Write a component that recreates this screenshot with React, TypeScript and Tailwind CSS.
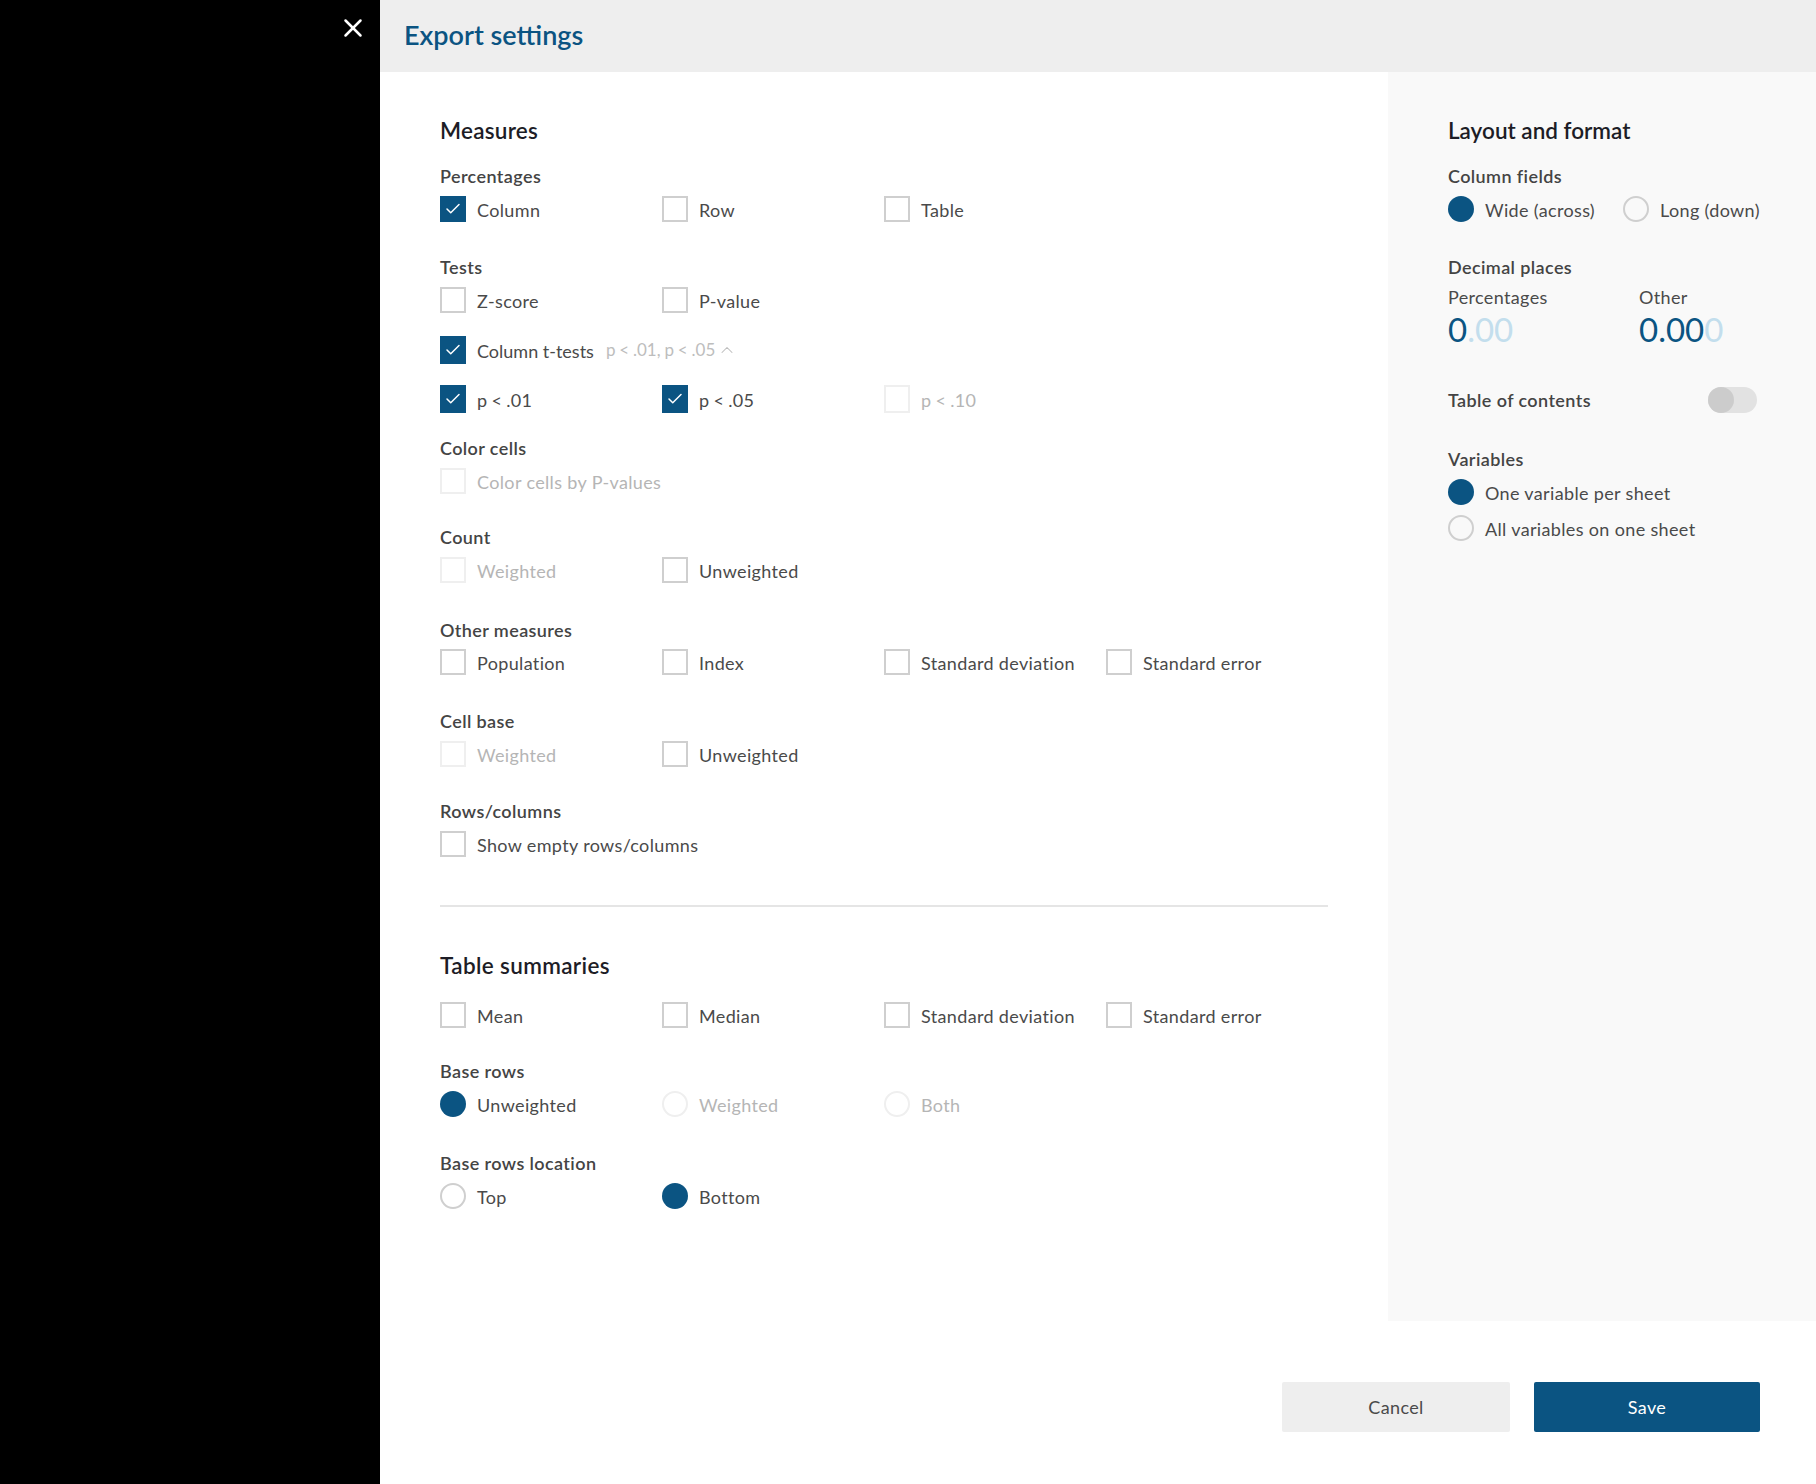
import { ReactNode } from 'react';
import { X, Check, ChevronUp } from 'lucide-react';

const font = "font-['Lato','Noto_Sans',sans-serif]";
const optBase = 'text-[18px] leading-[24px] pt-[2px] whitespace-nowrap';
const optText = `${optBase} tracking-[0.35px]`;

function Box({ checked, disabled, tall }: { checked?: boolean; disabled?: boolean; tall?: boolean }) {
  const h = tall ? 'h-[28px]' : 'h-[26px]';
  if (checked) {
    return (
      <span className={`w-[26px] ${h} shrink-0 bg-[#0b5482] flex items-center justify-center`}>
        <Check size={18} strokeWidth={2} className="text-white" />
      </span>
    );
  }
  return <span className={`w-[26px] ${h} shrink-0 border-2 ${disabled ? 'border-[#efefef]' : 'border-[#cfcfcf]'}`} />;
}

function Radio({ checked, disabled }: { checked?: boolean; disabled?: boolean }) {
  if (checked) return <span className="w-[26px] h-[26px] shrink-0 rounded-full bg-[#0b5482]" />;
  return <span className={`w-[26px] h-[26px] shrink-0 rounded-full border-2 ${disabled ? 'border-[#efefef]' : 'border-[#cfcfcf]'}`} />;
}

function Opt({ label, disabled, tight, children }: { label: string; disabled?: boolean; tight?: boolean; children: ReactNode }) {
  return (
    <div className="w-[222px] flex items-center gap-[11px] shrink-0">
      {children}
      <span className={`${optText} ${tight ? '[word-spacing:-1px]' : ''} ${disabled ? 'text-[#b5b5b5]' : 'text-[#4a4a4a]'}`}>{label}</span>
    </div>
  );
}

function Label({ children, className = '' }: { children: ReactNode; className?: string }) {
  return <div className={`text-[18px] tracking-[0.4px] leading-[21px] pt-px font-semibold text-[#444444] ${className}`}>{children}</div>;
}

function Heading({ children, className = '' }: { children: ReactNode; className?: string }) {
  return <h2 className={`text-[22.5px] leading-[28px] font-semibold text-[#1d1d26] ${className}`}>{children}</h2>;
}

export default function App() {
  return (
    <div className={`${font} w-[1816px] h-[1484px] flex bg-white overflow-hidden`}>
      {/* backdrop */}
      <div className="w-[380px] shrink-0 bg-black flex justify-end items-start pt-[13px] pr-[12px]">
        <X size={30} strokeWidth={2} className="text-white" />
      </div>

      <div className="flex-1 flex flex-col">
        <header className="h-[72px] shrink-0 bg-[#eeeeee] flex items-center pl-[24px] pb-[2px]">
          <h1 className="text-[27px] font-semibold text-[#0b5482]">Export settings</h1>
        </header>

        <div className="flex h-[1249px]">
          {/* Measures column */}
          <main className="w-[1008px] pl-[60px] pr-[60px] pt-[45px]">
            <Heading className="tracking-[0.25px]">Measures</Heading>
            <Label className="mt-[20px]">Percentages</Label>
            <div className="flex mt-[9px]">
              <Opt label="Column"><Box checked /></Opt>
              <Opt label="Row"><Box /></Opt>
              <Opt label="Table"><Box /></Opt>
            </div>

            <Label className="mt-[34px]">Tests</Label>
            <div className="flex mt-[9px]">
              <Opt label="Z-score"><Box /></Opt>
              <Opt label="P-value"><Box /></Opt>
            </div>
            <div className="flex items-center mt-[23px]">
              <Box checked tall />
              <span className={`ml-[11px] ${optBase} text-[#4a4a4a]`}>Column t-tests</span>
              <span className="ml-[12px] text-[17px] [word-spacing:-0.5px] text-[#bdbdbd]">p &lt; .01, p &lt; .05</span>
              <ChevronUp size={20} strokeWidth={1.25} className="ml-[2px] text-[#bdbdbd]" />
            </div>
            <div className="flex mt-[21px]">
              <Opt label="p < .01" tight><Box checked tall /></Opt>
              <Opt label="p < .05" tight><Box checked tall /></Opt>
              <Opt label="p < .10" tight disabled><Box disabled tall /></Opt>
            </div>

            <Label className="mt-[24px]">Color cells</Label>
            <div className="flex mt-[9px]">
              <Opt label="Color cells by P-values" disabled><Box disabled /></Opt>
            </div>

            <Label className="mt-[32px]">Count</Label>
            <div className="flex mt-[9px]">
              <Opt label="Weighted" disabled><Box disabled /></Opt>
              <Opt label="Unweighted"><Box /></Opt>
            </div>

            <Label className="mt-[36px]">Other measures</Label>
            <div className="flex mt-[8px]">
              <Opt label="Population"><Box /></Opt>
              <Opt label="Index"><Box /></Opt>
              <Opt label="Standard deviation"><Box /></Opt>
              <Opt label="Standard error"><Box /></Opt>
            </div>

            <Label className="mt-[35px]">Cell base</Label>
            <div className="flex mt-[9px]">
              <Opt label="Weighted" disabled><Box disabled /></Opt>
              <Opt label="Unweighted"><Box /></Opt>
            </div>

            <Label className="mt-[33px]">Rows/columns</Label>
            <div className="flex mt-[9px]">
              <Opt label="Show empty rows/columns"><Box /></Opt>
            </div>

            <div className="h-[2px] bg-[#e5e5e5] mt-[48px]" />

            <Heading className="mt-[45px] tracking-[0.35px]">Table summaries</Heading>
            <div className="flex mt-[22px]">
              <Opt label="Mean"><Box /></Opt>
              <Opt label="Median"><Box /></Opt>
              <Opt label="Standard deviation"><Box /></Opt>
              <Opt label="Standard error"><Box /></Opt>
            </div>

            <Label className="mt-[32px]">Base rows</Label>
            <div className="flex mt-[9px]">
              <Opt label="Unweighted"><Radio checked /></Opt>
              <Opt label="Weighted" disabled><Radio disabled /></Opt>
              <Opt label="Both" disabled><Radio disabled /></Opt>
            </div>

            <Label className="mt-[35px]">Base rows location</Label>
            <div className="flex mt-[9px]">
              <Opt label="Top"><Radio /></Opt>
              <Opt label="Bottom"><Radio checked /></Opt>
            </div>
          </main>

          {/* Layout and format column */}
          <aside className="w-[428px] bg-[#f9f9f9] pl-[60px] pt-[45px]">
            <Heading>Layout and format</Heading>
            <Label className="mt-[20px]">Column fields</Label>
            <div className="flex items-center mt-[9px]">
              <Radio checked />
              <span className={`ml-[11px] ${optText} text-[#4a4a4a]`}>Wide (across)</span>
              <span className="ml-[28px] flex"><Radio /></span>
              <span className={`ml-[11px] ${optText} text-[#4a4a4a]`}>Long (down)</span>
            </div>

            <Label className="mt-[34px]">Decimal places</Label>
            <div className="flex mt-[8px]">
              <div className="w-[191px]">
                <div className="text-[18px] tracking-[0.35px] leading-[22px] text-[#4a4a4a]">Percentages</div>
                <div className="text-[33px] leading-[36px] mt-[3px] text-[#c3deed]"><span className="text-[#0b5482]">0</span>.00</div>
              </div>
              <div>
                <div className="text-[18px] tracking-[0.35px] leading-[22px] text-[#4a4a4a]">Other</div>
                <div className="text-[33px] leading-[36px] mt-[3px] text-[#c3deed]"><span className="text-[#0b5482]">0.00</span>0</div>
              </div>
            </div>

            <div className="flex items-center w-[309px] mt-[40px]">
              <Label className="flex-1">Table of contents</Label>
              <div className="w-[49px] h-[26px] rounded-full bg-[#e2e2e2]">
                <div className="w-[26px] h-[26px] rounded-full bg-[#cccccc]" />
              </div>
            </div>

            <Label className="mt-[35px]">Variables</Label>
            <div className="flex items-center gap-[11px] mt-[9px]">
              <Radio checked />
              <span className={`${optText} text-[#4a4a4a]`}>One variable per sheet</span>
            </div>
            <div className="flex items-center gap-[11px] mt-[10px]">
              <Radio />
              <span className={`${optText} text-[#4a4a4a]`}>All variables on one sheet</span>
            </div>
          </aside>
        </div>

        <footer className="flex-1 flex justify-end items-start pt-[61px] pr-[56px] gap-[24px]">
          <button className="w-[228px] h-[50px] rounded-[2px] bg-[#eeeeee] text-[18px] tracking-[0.35px] text-[#4a4a4a]">Cancel</button>
          <button className="w-[226px] h-[50px] rounded-[2px] bg-[#0b5482] text-[18px] tracking-[0.35px] text-white">Save</button>
        </footer>
      </div>
    </div>
  );
}
